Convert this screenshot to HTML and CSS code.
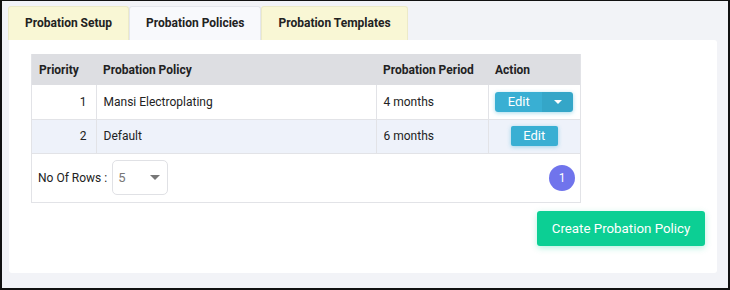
FILE: index.html
```html
<!DOCTYPE html>
<html lang="en">
<head>
    <meta charset="UTF-8">
    <meta name="viewport" content="width=device-width, initial-scale=1.0">
    <title>Probation Policies</title>
    <link rel="stylesheet" href="styles.css">
</head>
<body>
    <div class="frame">
        <div class="tabs">
            <div class="tab">Probation Setup</div>
            <div class="tab active">Probation Policies</div>
            <div class="tab">Probation Templates</div>
        </div>
        <div class="card">
            <div class="table-box">
                <table class="policy-table">
                    <thead>
                        <tr>
                            <th class="col-priority">Priority</th>
                            <th class="col-policy">Probation Policy</th>
                            <th class="col-period">Probation Period</th>
                            <th class="col-action">Action</th>
                        </tr>
                    </thead>
                    <tbody>
                        <tr>
                            <td class="num">1</td>
                            <td>Mansi Electroplating</td>
                            <td>4 months</td>
                            <td class="action">
                                <div class="split-btn">
                                    <button class="btn-edit">Edit</button>
                                    <button class="btn-caret"><span class="caret"></span></button>
                                </div>
                            </td>
                        </tr>
                        <tr class="alt">
                            <td class="num">2</td>
                            <td>Default</td>
                            <td>6 months</td>
                            <td class="action">
                                <button class="btn-edit single">Edit</button>
                            </td>
                        </tr>
                    </tbody>
                </table>
                <div class="table-footer">
                    <div class="rows-select">
                        <label for="rowCount">No Of Rows :</label>
                        <div class="select-box" id="rowCount">
                            <span>5</span>
                            <span class="caret grey"></span>
                        </div>
                    </div>
                    <div class="page-dot">1</div>
                </div>
            </div>
            <div class="card-actions">
                <button class="btn-create">Create Probation Policy</button>
            </div>
        </div>
    </div>
</body>
</html>
```

FILE: styles.css
```css
* {
    box-sizing: border-box;
}
html, body {
    margin: 0;
    padding: 0;
}
body {
    font-family: Roboto, "Liberation Sans", sans-serif;
    color: #222;
    background: #000;
}
.frame {
    width: 730px;
    height: 290px;
    border: 2px solid #111;
    border-top-width: 1px;
    background: #f2f3f7;
    padding: 5px 11px 0 6px;
    overflow: hidden;
}
.tabs {
    display: flex;
    height: 34px;
}
.tab {
    background: #f9f7d5;
    border: 1px solid #eceac8;
    border-bottom: none;
    border-radius: 3px 3px 0 0;
    padding: 0 16px;
    font-size: 12px;
    font-weight: bold;
    line-height: 33px;
    color: #222;
}
.tab.active {
    background: #f8f9fc;
    border-color: #e4e6ec;
}
.card {
    background: #fff;
    margin-left: 1px;
    height: 233px;
    border-radius: 0 3px 3px 3px;
    padding: 14px 12px 0 22px;
}
.table-box {
    width: 550px;
    border: 1px solid #e2e3e7;
    border-top: none;
}
.policy-table {
    width: 100%;
    border-collapse: collapse;
    font-size: 12px;
}
.policy-table th {
    background: #dddee2;
    text-align: left;
    font-weight: bold;
    height: 31px;
    padding: 0 7px;
    white-space: nowrap;
}
.policy-table td {
    height: 34px;
    padding: 0 7px;
    border: 1px solid #e2e3e7;
    border-top: none;
}
.policy-table tr td:first-child {
    border-left: none;
}
.policy-table tr td:last-child {
    border-right: none;
}
.policy-table tr.alt td {
    background: #eef2fa;
}
.col-priority { width: 64px; }
.col-policy { width: 280px; }
.col-period { width: 112px; }
.policy-table td.num {
    text-align: right;
    padding-right: 9px;
}
.policy-table td.action {
    text-align: center;
    padding: 0;
}
.split-btn {
    display: inline-flex;
    border-radius: 3px;
    box-shadow: 0 1px 4px rgba(56, 175, 210, 0.45);
    overflow: hidden;
    vertical-align: middle;
}
button {
    font-family: inherit;
    border: none;
    cursor: pointer;
}
.btn-edit {
    background: #39afd3;
    color: #fff;
    font-size: 13px;
    width: 47px;
    height: 20px;
    padding: 0;
    line-height: 20px;
}
.btn-edit.single {
    border-radius: 2px;
    box-shadow: 0 1px 4px rgba(56, 175, 210, 0.45);
    vertical-align: middle;
}
.btn-caret {
    background: #34a6c8;
    width: 31px;
    height: 20px;
    padding: 0;
    display: flex;
    align-items: center;
    justify-content: center;
}
.caret {
    display: inline-block;
    width: 0;
    height: 0;
    border-left: 4px solid transparent;
    border-right: 4px solid transparent;
    border-top: 4px solid #fff;
}
.caret.grey {
    border-left-width: 5px;
    border-right-width: 5px;
    border-top: 5px solid #777;
}
.table-footer {
    height: 48px;
    display: flex;
    align-items: center;
    justify-content: space-between;
    padding: 0 5px 0 6px;
}
.rows-select {
    display: flex;
    align-items: center;
    font-size: 12px;
}
.rows-select label {
    margin-right: 5px;
}
.select-box {
    width: 56px;
    height: 35px;
    border: 1px solid #e0e1e5;
    border-radius: 5px;
    display: flex;
    align-items: center;
    justify-content: space-between;
    padding: 0 7px 0 5px;
    font-size: 13px;
    color: #777;
}
.page-dot {
    width: 26px;
    height: 26px;
    border-radius: 50%;
    background: #7074ec;
    color: #fff;
    font-size: 12px;
    text-align: center;
    line-height: 26px;
}
.card-actions {
    display: flex;
    justify-content: flex-end;
    margin-top: 8px;
}
.btn-create {
    background: #0ccf94;
    color: #fff;
    font-size: 13.3px;
    width: 168px;
    height: 35px;
    border-radius: 3px;
    box-shadow: 0 2px 6px rgba(12, 207, 148, 0.3);
}
```
